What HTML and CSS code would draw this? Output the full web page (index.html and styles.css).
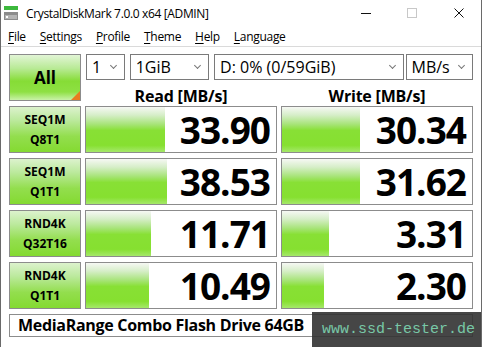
FILE: index.html
```html
<!DOCTYPE html>
<html lang="en">
<head>
    <meta charset="UTF-8">
    <title>CrystalDiskMark 7.0.0 x64 [ADMIN]</title>
    <link rel="stylesheet" href="styles.css">
</head>
<body>
<div class="window">
    <div class="titlebar">
        <svg class="app-icon" width="14" height="14" viewBox="0 0 14 14">
            <rect x="0" y="0" width="14" height="4" fill="#3cb83c"/>
            <rect x="0" y="6" width="14" height="8" fill="#8c8c8c"/>
            <rect x="1" y="9" width="12" height="4" fill="#b4b4b4"/>
            <rect x="2" y="10" width="2" height="2" fill="#ffffff"/>
        </svg>
        <span class="title">CrystalDiskMark 7.0.0 x64 [ADMIN]</span>
        <div class="controls">
            <span class="ctl ctl-min"></span>
            <span class="ctl ctl-max"></span>
            <svg class="ctl-close" width="10" height="10" viewBox="0 0 10 10">
                <path d="M0.5 0.5 L9.5 9.5 M9.5 0.5 L0.5 9.5" stroke="#111" stroke-width="1"/>
            </svg>
        </div>
    </div>

    <div class="menubar">
        <span><u>F</u>ile</span>
        <span><u>S</u>ettings</span>
        <span><u>P</u>rofile</span>
        <span><u>T</u>heme</span>
        <span><u>H</u>elp</span>
        <span><u>L</u>anguage</span>
    </div>

    <div class="client">
        <div class="all-btn">All<span class="corner"></span></div>

        <div class="selects">
            <div class="select s-count">1<span class="chev"></span></div>
            <div class="select s-size">1GiB<span class="chev"></span></div>
            <div class="select s-drive">D: 0% (0/59GiB)<span class="chev"></span></div>
            <div class="select s-unit">MB/s<span class="chev"></span></div>
        </div>

        <div class="head">Read [MB/s]</div>
        <div class="head">Write [MB/s]</div>

        <div class="label">SEQ1M<br>Q8T1</div>
        <div class="result"><div class="bar" style="width: 79px"></div><span class="num">33.90</span></div>
        <div class="result"><div class="bar" style="width: 78px"></div><span class="num">30.34</span></div>

        <div class="label">SEQ1M<br>Q1T1</div>
        <div class="result"><div class="bar" style="width: 81px"></div><span class="num">38.53</span></div>
        <div class="result"><div class="bar" style="width: 78px"></div><span class="num">31.62</span></div>

        <div class="label">RND4K<br>Q32T16</div>
        <div class="result"><div class="bar" style="width: 65px"></div><span class="num">11.71</span></div>
        <div class="result"><div class="bar" style="width: 47px"></div><span class="num">3.31</span></div>

        <div class="label">RND4K<br>Q1T1</div>
        <div class="result"><div class="bar" style="width: 63px"></div><span class="num">10.49</span></div>
        <div class="result"><div class="bar" style="width: 42px"></div><span class="num">2.30</span></div>

        <div class="comment">MediaRange Combo Flash Drive 64GB</div>
    </div>

    <div class="watermark">www.ssd-tester.de</div>
</div>
</body>
</html>
```

FILE: styles.css
```css
body {
    margin: 0;
    padding: 0;
    font-family: 'Open Sans', 'Noto Sans', sans-serif;
    color: #000;
    background: #fff;
    overflow: hidden;
}

.window {
    position: relative;
    width: 480px;
    height: 347px;
    border-left: 1px solid #6a6a6a;
    border-right: 1px solid #6a6a6a;
    background: #fff;
    overflow: hidden;
}

/* title bar */
.titlebar {
    height: 26px;
    display: flex;
    align-items: center;
    padding-left: 3px;
}

.app-icon {
    margin-right: 8px;
}

.title {
    font-size: 12px;
    letter-spacing: -0.35px;
}

.controls {
    margin-left: auto;
    display: flex;
    align-items: center;
    height: 26px;
}

.ctl-min {
    width: 10px;
    height: 1px;
    background: #111;
    margin-right: 36px;
}

.ctl-max {
    width: 8px;
    height: 8px;
    border: 1px solid #c8c8c8;
    margin-right: 37px;
}

.ctl-close {
    margin-right: 17px;
}

/* menu */
.menubar {
    height: 20px;
    display: flex;
    align-items: center;
    gap: 14px;
    padding-left: 7px;
    font-size: 12px;
    letter-spacing: -0.3px;
    border-bottom: 1px solid #dadada;
}

.menubar u {
    text-decoration-thickness: 1px;
    text-underline-offset: 2px;
}

/* main grid */
.client {
    display: grid;
    grid-template-columns: 72px 192px 192px;
    grid-template-rows: 26px 16px repeat(4, 47px) 23px;
    column-gap: 4px;
    row-gap: 5px;
    padding: 7px 0 0 8px;
}

.all-btn {
    grid-row: 1 / 3;
    position: relative;
    border: 1px solid #8c8c8c;
    box-sizing: border-box;
    display: flex;
    align-items: center;
    justify-content: center;
    font-weight: 700;
    font-size: 17px;
    background: linear-gradient(to bottom, #e2f5d6 0%, #b8ea95 30%, #86dc36 58%, #8ee043 82%, #c9f2a8 100%);
}

.corner {
    position: absolute;
    right: 0;
    bottom: 0;
    width: 0;
    height: 0;
    border-left: 9px solid transparent;
    border-bottom: 9px solid #e87c20;
}

.selects {
    grid-column: 2 / 4;
    display: flex;
    gap: 5px;
    padding-left: 1px;
}

.select {
    position: relative;
    box-sizing: border-box;
    height: 26px;
    border: 1px solid #7a7a7a;
    background: #fff;
    font-size: 16px;
    line-height: 24px;
    padding-left: 5px;
}

.s-count { width: 39px; }
.s-size { width: 80px; }
.s-drive { width: 191px; }
.s-unit { width: 68px; margin-left: -3px; }

.chev {
    position: absolute;
    right: 8px;
    top: 8px;
    width: 4px;
    height: 4px;
    border-right: 1px solid #777;
    border-bottom: 1px solid #777;
    transform: rotate(45deg);
}

.head {
    font-weight: 700;
    font-size: 16px;
    line-height: 16px;
    text-align: center;
    padding-top: 3px;
    letter-spacing: -0.2px;
}

.label {
    border: 1px solid #8c8c8c;
    box-sizing: border-box;
    display: flex;
    align-items: center;
    justify-content: center;
    text-align: center;
    font-weight: 700;
    font-size: 12px;
    line-height: 20px;
    background: linear-gradient(to bottom, #dcf2cd 0%, #bbe99c 30%, #93de4e 65%, #84da31 100%);
}

.result {
    position: relative;
    border: 1px solid #8c8c8c;
    box-sizing: border-box;
    display: flex;
    align-items: center;
    justify-content: flex-end;
    padding-right: 6px;
    background: #fff;
}

.bar {
    position: absolute;
    left: 0;
    top: 0;
    bottom: 0;
    background: linear-gradient(to bottom, #f6f8f4 0%, #d6eec8 18%, #a8e47a 38%, #88e035 52%, #86e030 85%, #a5e86a 100%);
}

.num {
    position: relative;
    font-weight: 700;
    font-size: 37px;
    line-height: 40px;
    letter-spacing: -1px;
}

.comment {
    grid-column: 1 / 4;
    border: 1px solid #8c8c8c;
    box-sizing: border-box;
    font-weight: 700;
    font-size: 16px;
    line-height: 21px;
    letter-spacing: -0.3px;
    padding-left: 8px;
}

/* watermark overlay */
.watermark {
    position: absolute;
    left: 311px;
    top: 312px;
    width: 171px;
    height: 35px;
    background: rgba(50, 50, 50, 0.9);
    color: #78c8a6;
    font-family: 'Liberation Mono', monospace;
    font-size: 15px;
    line-height: 35px;
    padding-left: 10px;
    box-sizing: border-box;
}
```
